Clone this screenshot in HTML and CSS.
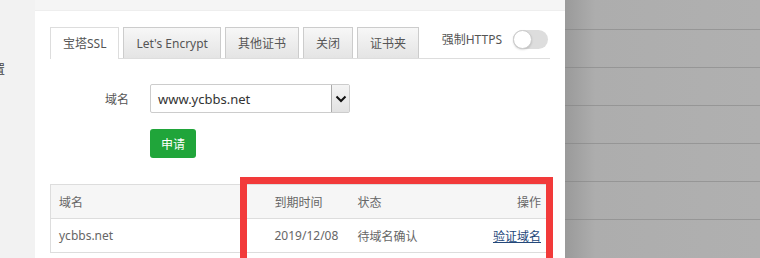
FILE: index.html
```html
<!DOCTYPE html>
<html lang="zh-CN">
<head>
  <meta charset="UTF-8" />
  <title>SSL</title>
  <link rel="stylesheet" href="styles.css">
</head>
<body>

<div class="page">
  <div class="side"><span class="side-text">置</span></div>

  <div class="main">
    <div class="topbar"></div>
    <div class="panel">
      <div class="tabs">
        <div class="tab on">宝塔SSL</div>
        <div class="tab">Let's Encrypt</div>
        <div class="tab">其他证书</div>
        <div class="tab">关闭</div>
        <div class="tab">证书夹</div>
        <div class="force">
          <span>强制HTTPS</span>
          <span class="switch"><span class="knob"></span></span>
        </div>
      </div>

      <div class="line">
        <label class="tname">域名</label>
        <div class="select">
          <span class="select-val">www.ycbbs.net</span>
          <span class="select-btn">
            <svg width="12" height="8" viewBox="0 0 12 8"><path d="M1.5 1.5 L6 6 L10.5 1.5" fill="none" stroke="#111" stroke-width="2"/></svg>
          </span>
        </div>
      </div>
      <div class="line">
        <button class="btn-apply">申请</button>
      </div>

      <table class="list">
        <colgroup>
          <col style="width:216px">
          <col style="width:83px">
          <col style="width:100px">
          <col>
        </colgroup>
        <thead>
          <tr><th>域名</th><th>到期时间</th><th>状态</th><th class="r">操作</th></tr>
        </thead>
        <tbody>
          <tr><td>ycbbs.net</td><td>2019/12/08</td><td>待域名确认</td><td class="r"><a href="#">验证域名</a></td></tr>
        </tbody>
      </table>

      <div class="mark"></div>
    </div>
  </div>

  <div class="shade"></div>
</div>

</body>
</html>
```

FILE: styles.css
```css
html, body { margin: 0; padding: 0; }
body { font-family: "Noto Sans", "Noto Sans CJK SC", sans-serif; font-size: 12px; color: #555; width: 760px; height: 258px; overflow: hidden; background: #fff; }
.page { display: flex; height: 258px; overflow: hidden; }

.side { width: 35px; flex-shrink: 0; background: #f2f2f2; padding-top: 62px; box-sizing: border-box; overflow: hidden; }
.side-text { display: block; margin-left: -7px; font-size: 12px; line-height: 16px; color: #444; }

.main { width: 530px; flex-shrink: 0; display: flex; flex-direction: column; }
.topbar { height: 11px; flex-shrink: 0; background: #f5f5f5; border-bottom: 1px solid #eee; box-sizing: border-box; }
.panel { flex: 1; position: relative; padding: 16px 15px 0 15px; background: #fff; }

.tabs { display: flex; height: 31px; border-bottom: 1px solid #ddd; }
.tab { height: 31px; line-height: 31px; padding: 0 12px; margin-right: 4px; box-sizing: border-box; border: 1px solid #ccc; border-bottom: none; background: linear-gradient(#f7f7f7, #e4e4e4); color: #555; white-space: nowrap; }
.tab.on { background: #fff; border-color: #ddd; height: 32px; }
.force { margin-left: auto; display: flex; align-items: center; height: 22px; margin-top: 1px; gap: 11px; color: #555; }
.switch { position: relative; display: inline-block; width: 35px; height: 19px; border-radius: 10px; background: #ddd; margin-right: 2px; }
.knob { position: absolute; left: 0; top: 0; width: 17px; height: 17px; border-radius: 50%; background: #fff; border: 1px solid #ccc; box-shadow: 0 1px 2px rgba(0,0,0,0.15); }

.line { display: flex; align-items: center; margin-top: 25px; }
.line + .line { margin-top: 16px; padding-left: 100px; }
.tname { width: 79px; padding-right: 21px; text-align: right; color: #555; }
.select { width: 200px; height: 29px; box-sizing: border-box; border: 1px solid #ccc; border-radius: 2px; display: flex; align-items: center; }
.select-val { flex: 1; padding-left: 7px; font-size: 13px; color: #333; }
.select-btn { width: 18px; height: 27px; box-sizing: border-box; border-left: 1px solid #aaa; background: linear-gradient(#f4f4f4, #e2e2e2); display: flex; align-items: center; justify-content: center; }
.btn-apply { width: 46px; height: 29px; border: none; border-radius: 3px; background: #20a53a; color: #fff; font-family: inherit; font-size: 12px; padding: 0; }

.list { margin-top: 26px; width: 500px; border-collapse: collapse; table-layout: fixed; border: 1px solid #ddd; }
.list th, .list td { height: 33px; padding: 0 8px; text-align: left; font-weight: normal; color: #666; border-bottom: 1px solid #ddd; white-space: nowrap; }
.list th { background: #f6f6f6; }
.list .r { text-align: right; }
.list a { color: #24487a; text-decoration: underline; }

.mark { position: absolute; left: 205px; top: 166px; width: 313px; height: 100px; box-sizing: border-box; border: 7px solid #f23a3a; }

.shade { flex: 1; background:
  repeating-linear-gradient(to bottom, transparent 0 37px, rgba(120,120,120,0.45) 37px 38px) 0 -8px,
  linear-gradient(to right, #9a9a9a, #adadad 30px, #b0b0b0); }
```
